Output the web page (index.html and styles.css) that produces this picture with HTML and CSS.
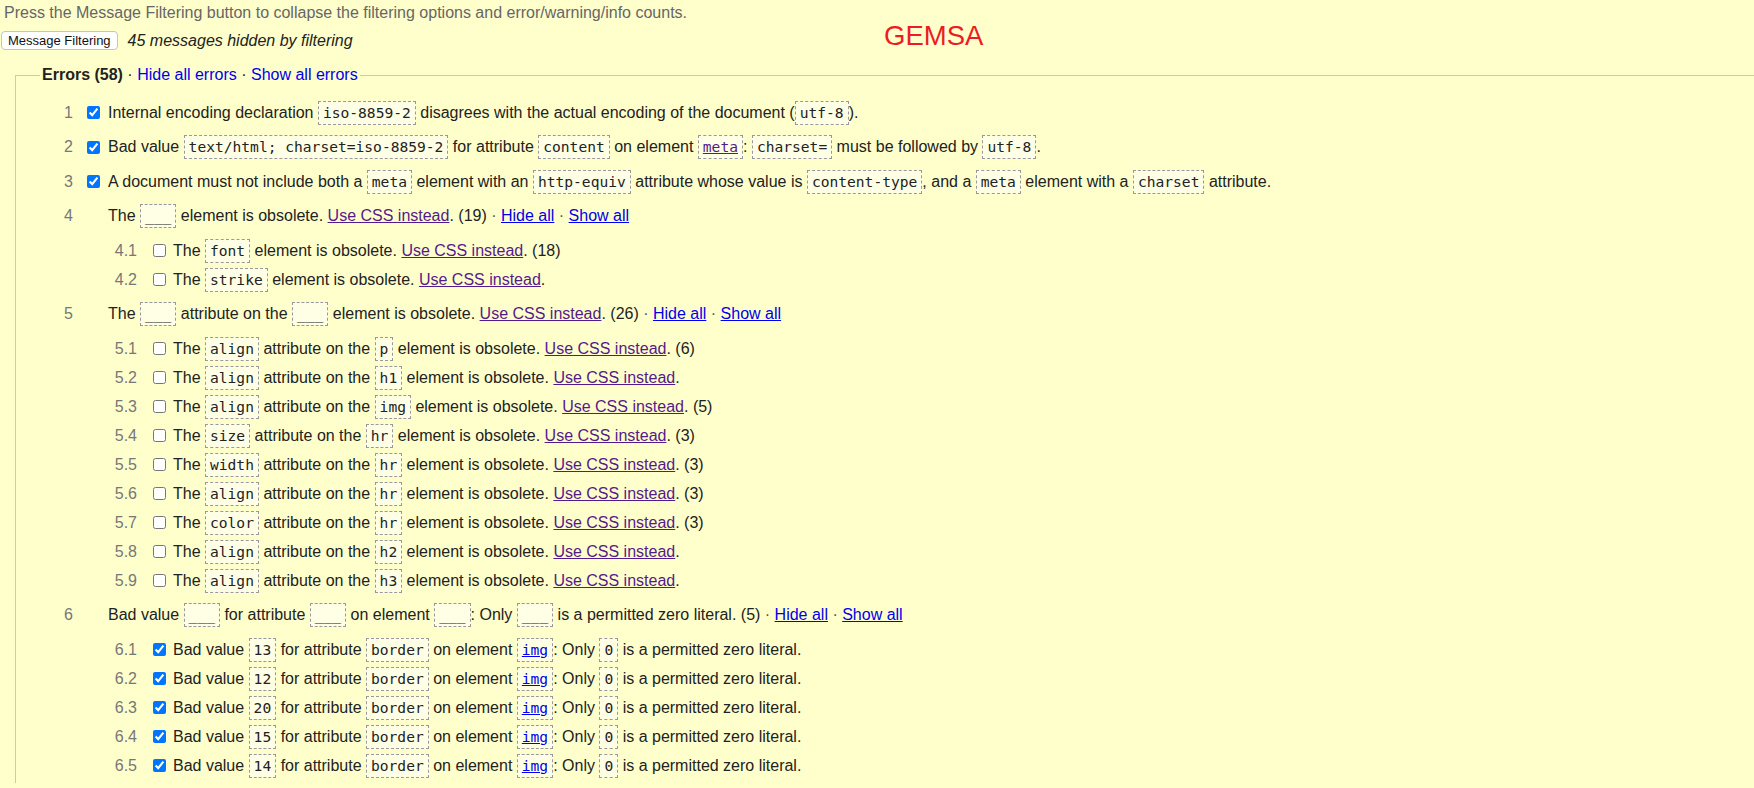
FILE: index.html
```html
<!DOCTYPE html>
<html lang="en">
<head>
<meta charset="utf-8">
<title>Nu Html Checker</title>
<link rel="stylesheet" href="styles.css">
</head>
<body>
<div class="page">
  <p class="hint">Press the Message Filtering button to collapse the filtering options and error/warning/info counts.</p>
  <div class="filter-bar">
    <button class="filter-btn" type="button">Message Filtering</button>
    <span class="hidden-count">45 messages hidden by filtering</span>
  </div>
  <div class="brand">GEMSA</div>

  <fieldset class="group">
    <legend class="group-title"><strong>Errors (58)</strong> · <a class="lnk" href="#">Hide all errors</a> · <a class="lnk" href="#">Show all errors</a></legend>
    <ol class="msgs">
      <li class="msg">
        <div class="row">
          <span class="num">1</span><input class="cb" type="checkbox" checked>
          <span class="text">Internal encoding declaration <code>iso-8859-2</code> disagrees with the actual encoding of the document (<code>utf-8</code>).</span>
        </div>
      </li>
      <li class="msg">
        <div class="row">
          <span class="num">2</span><input class="cb" type="checkbox" checked>
          <span class="text">Bad value <code>text/html; charset=iso-8859-2</code> for attribute <code>content</code> on element <a class="visited" href="#"><code>meta</code></a>: <code>charset=</code> must be followed by <code>utf-8</code>.</span>
        </div>
      </li>
      <li class="msg">
        <div class="row">
          <span class="num">3</span><input class="cb" type="checkbox" checked>
          <span class="text">A document must not include both a <code>meta</code> element with an <code>http-equiv</code> attribute whose value is <code>content-type</code>, and a <code>meta</code> element with a <code>charset</code> attribute.</span>
        </div>
      </li>
      <li class="msg">
        <div class="row">
          <span class="num">4</span><span class="cb-slot"></span>
          <span class="text">The <code>___</code> element is obsolete. <a class="visited" href="#">Use CSS instead</a>. (19) <span class="sep">·</span> <a class="ul" href="#">Hide all</a> <span class="sep">·</span> <a class="ul" href="#">Show all</a></span>
        </div>
        <ol class="sub">
          <li class="row sub-row"><span class="num">4.1</span><input class="cb" type="checkbox"><span class="text">The <code>font</code> element is obsolete. <a class="visited" href="#">Use CSS instead</a>. (18)</span></li>
          <li class="row sub-row"><span class="num">4.2</span><input class="cb" type="checkbox"><span class="text">The <code>strike</code> element is obsolete. <a class="visited" href="#">Use CSS instead</a>.</span></li>
        </ol>
      </li>
      <li class="msg">
        <div class="row">
          <span class="num">5</span><span class="cb-slot"></span>
          <span class="text">The <code>___</code> attribute on the <code>___</code> element is obsolete. <a class="visited" href="#">Use CSS instead</a>. (26) <span class="sep">·</span> <a class="ul" href="#">Hide all</a> <span class="sep">·</span> <a class="ul" href="#">Show all</a></span>
        </div>
        <ol class="sub">
          <li class="row sub-row"><span class="num">5.1</span><input class="cb" type="checkbox"><span class="text">The <code>align</code> attribute on the <code>p</code> element is obsolete. <a class="visited" href="#">Use CSS instead</a>. (6)</span></li>
          <li class="row sub-row"><span class="num">5.2</span><input class="cb" type="checkbox"><span class="text">The <code>align</code> attribute on the <code>h1</code> element is obsolete. <a class="visited" href="#">Use CSS instead</a>.</span></li>
          <li class="row sub-row"><span class="num">5.3</span><input class="cb" type="checkbox"><span class="text">The <code>align</code> attribute on the <code>img</code> element is obsolete. <a class="visited" href="#">Use CSS instead</a>. (5)</span></li>
          <li class="row sub-row"><span class="num">5.4</span><input class="cb" type="checkbox"><span class="text">The <code>size</code> attribute on the <code>hr</code> element is obsolete. <a class="visited" href="#">Use CSS instead</a>. (3)</span></li>
          <li class="row sub-row"><span class="num">5.5</span><input class="cb" type="checkbox"><span class="text">The <code>width</code> attribute on the <code>hr</code> element is obsolete. <a class="visited" href="#">Use CSS instead</a>. (3)</span></li>
          <li class="row sub-row"><span class="num">5.6</span><input class="cb" type="checkbox"><span class="text">The <code>align</code> attribute on the <code>hr</code> element is obsolete. <a class="visited" href="#">Use CSS instead</a>. (3)</span></li>
          <li class="row sub-row"><span class="num">5.7</span><input class="cb" type="checkbox"><span class="text">The <code>color</code> attribute on the <code>hr</code> element is obsolete. <a class="visited" href="#">Use CSS instead</a>. (3)</span></li>
          <li class="row sub-row"><span class="num">5.8</span><input class="cb" type="checkbox"><span class="text">The <code>align</code> attribute on the <code>h2</code> element is obsolete. <a class="visited" href="#">Use CSS instead</a>.</span></li>
          <li class="row sub-row"><span class="num">5.9</span><input class="cb" type="checkbox"><span class="text">The <code>align</code> attribute on the <code>h3</code> element is obsolete. <a class="visited" href="#">Use CSS instead</a>.</span></li>
        </ol>
      </li>
      <li class="msg">
        <div class="row">
          <span class="num">6</span><span class="cb-slot"></span>
          <span class="text">Bad value <code>___</code> for attribute <code>___</code> on element <code>___</code>: Only <code>___</code> is a permitted zero literal. (5) <span class="sep">·</span> <a class="ul" href="#">Hide all</a> <span class="sep">·</span> <a class="ul" href="#">Show all</a></span>
        </div>
        <ol class="sub">
          <li class="row sub-row"><span class="num">6.1</span><input class="cb" type="checkbox" checked><span class="text">Bad value <code>13</code> for attribute <code>border</code> on element <a class="ul" href="#"><code>img</code></a>: Only <code>0</code> is a permitted zero literal.</span></li>
          <li class="row sub-row"><span class="num">6.2</span><input class="cb" type="checkbox" checked><span class="text">Bad value <code>12</code> for attribute <code>border</code> on element <a class="ul" href="#"><code>img</code></a>: Only <code>0</code> is a permitted zero literal.</span></li>
          <li class="row sub-row"><span class="num">6.3</span><input class="cb" type="checkbox" checked><span class="text">Bad value <code>20</code> for attribute <code>border</code> on element <a class="ul" href="#"><code>img</code></a>: Only <code>0</code> is a permitted zero literal.</span></li>
          <li class="row sub-row"><span class="num">6.4</span><input class="cb" type="checkbox" checked><span class="text">Bad value <code>15</code> for attribute <code>border</code> on element <a class="ul" href="#"><code>img</code></a>: Only <code>0</code> is a permitted zero literal.</span></li>
          <li class="row sub-row"><span class="num">6.5</span><input class="cb" type="checkbox" checked><span class="text">Bad value <code>14</code> for attribute <code>border</code> on element <a class="ul" href="#"><code>img</code></a>: Only <code>0</code> is a permitted zero literal.</span></li>
        </ol>
      </li>
    </ol>
  </fieldset>
</div>
</body>
</html>
```

FILE: styles.css
```css
html {
  overflow: hidden;
}

body {
  margin: 0;
  background: #ffffcc;
  color: #222;
  font-family: "Liberation Sans", Arial, sans-serif;
  font-size: 16px;
}

.page {
  position: relative;
  padding-top: 4px;
}

.hint {
  margin: 0;
  padding-left: 4px;
  line-height: 18px;
  color: #666;
}

.filter-bar {
  display: flex;
  align-items: center;
  height: 19px;
  margin-top: 9px;
}

.filter-btn {
  height: 19px;
  margin: 0 10px 0 1px;
  padding: 0 6px;
  font-family: "Liberation Sans", Arial, sans-serif;
  font-size: 13px;
  line-height: 17px;
  color: #111;
  background: #fff;
  border: 1px solid #c4c4c4;
  border-radius: 4px;
}

.hidden-count {
  font-style: italic;
  color: #222;
  line-height: 18px;
}

.brand {
  position: absolute;
  left: 884px;
  top: 20px;
  font-size: 27.5px;
  line-height: 32px;
  color: #ed1c24;
}

.group {
  margin: 16px -30px 0 15px;
  padding: 11.6px 0 0 25px;
  border: 1px solid #c8c8c8;
  border-bottom: 0;
}

.group-title {
  margin-left: -1px;
  padding: 0 2px;
  line-height: 18px;
  color: #222;
}

.lnk {
  color: #0000ee;
  text-decoration: none;
}

.ul {
  color: #0000ee;
  text-decoration: underline;
}

.visited {
  color: #551a8b;
  text-decoration: underline;
}

.sep {
  color: #555;
}

.msgs,
.sub {
  list-style: none;
  margin: 0;
  padding: 0;
}

.row {
  display: flex;
  align-items: center;
  padding: 5.25px 0;
}

.num {
  flex: none;
  width: 32px;
  text-align: right;
  color: #777;
  line-height: 24px;
}

.cb,
.cb-slot {
  flex: none;
  width: 13px;
  height: 13px;
  margin: 0 8px 0 14px;
  accent-color: #0075ff;
}

.text {
  line-height: 24px;
  white-space: nowrap;
}

.sub {
  padding: 2.75px 0 2.75px 67px;
}

.sub-row {
  padding: 2.5px 0;
}

.sub-row .num {
  width: 29px;
}

.sub-row .cb {
  margin: 0 7px 0 16px;
}

code {
  display: inline-block;
  padding: 0 4px;
  line-height: 22px;
  font-family: "DejaVu Sans Mono", "Liberation Mono", monospace;
  font-size: 14.6px;
  color: #222;
  background: #ffffe6;
  border: 1px dashed #999;
}

a code {
  color: inherit;
  text-decoration: underline;
}
```
